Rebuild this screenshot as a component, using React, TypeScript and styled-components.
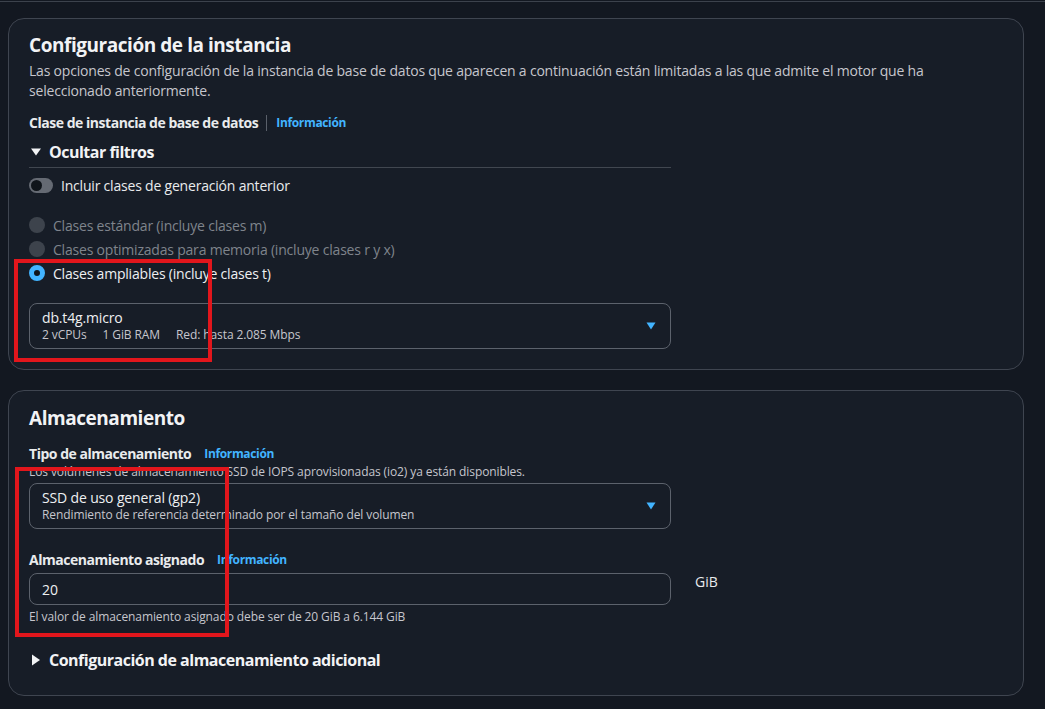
import React from "react";
import styled, { createGlobalStyle } from "styled-components";

const Global = createGlobalStyle`
  html, body { margin: 0; padding: 0; background: #131821; }
  body { font-family: "Open Sans", "Noto Sans", sans-serif; color: #e9ebed; }
  * { box-sizing: border-box; }
`;

const Page = styled.div`
  position: relative;
  width: 1045px;
  height: 709px;
  overflow: hidden;
  background: #131821;
`;

const TopRule = styled.div`
  margin-top: 1px;
  height: 1px;
  background: #3c424c;
`;

const Stack = styled.div`
  display: flex;
  flex-direction: column;
  gap: 20px;
  padding: 16px 21px 0 8px;
`;

const Card = styled.section<{ $pt: number; $pb: number }>`
  background: #171d27;
  border: 1px solid #3f4550;
  border-radius: 16px;
  padding: ${(p) => `${p.$pt}px 20px ${p.$pb}px 20px`};
  display: flex;
  flex-direction: column;
`;

const Title = styled.h2`
  margin: 0;
  font-size: 19px;
  line-height: 24px;
  font-weight: 700;
  color: #f2f3f5;
  letter-spacing: -0.45px;
`;

const Desc = styled.p`
  margin: 4px 0 0;
  font-size: 14px;
  line-height: 20px;
  color: #c6c6cd;
  max-width: 930px;
  letter-spacing: -0.2px;
`;

const LabelRow = styled.div<{ $mt: number }>`
  display: flex;
  align-items: center;
  margin-top: ${(p) => p.$mt}px;
  height: 20px;
`;

const Label = styled.span`
  font-size: 14px;
  font-weight: 700;
  color: #e9ebed;
  line-height: 20px;
  letter-spacing: -0.47px;
`;

const Divider = styled.span`
  width: 1px;
  height: 16px;
  background: #5a606a;
  margin: 0 9px 0 8px;
`;

const Info = styled.a<{ $gap?: number }>`
  font-size: 12px;
  font-weight: 700;
  color: #42b4ff;
  margin-left: ${(p) => p.$gap ?? 0}px;
  line-height: 16px;
  text-decoration: none;
  letter-spacing: -0.35px;
`;

const Expander = styled.div<{ $mt: number; $line?: boolean }>`
  display: flex;
  align-items: center;
  gap: 8px;
  margin-top: ${(p) => p.$mt}px;
  width: 642px;
  padding-bottom: ${(p) => (p.$line ? 4 : 0)}px;
  border-bottom: ${(p) => (p.$line ? "1px solid #414750" : "none")};
  font-size: 16px;
  line-height: 22px;
  font-weight: 700;
  color: #f2f3f5;
  letter-spacing: -0.5px;
`;

const Caret = styled.svg`
  flex: none;
  margin-left: 2px;
`;

const ToggleRow = styled.div`
  display: flex;
  align-items: center;
  gap: 8px;
  margin-top: 6px;
  height: 22px;
  font-size: 14px;
  color: #e9ebed;
  letter-spacing: -0.2px;
`;

const Track = styled.span`
  width: 24px;
  height: 15px;
  border-radius: 8px;
  background: #656a73;
  display: flex;
  align-items: center;
  padding-left: 2px;
`;

const Knob = styled.span`
  width: 11px;
  height: 11px;
  border-radius: 50%;
  background: #0f141a;
`;

const RadioGroup = styled.div`
  display: flex;
  flex-direction: column;
  margin-top: 17px;
`;

const RadioRow = styled.label<{ $disabled?: boolean }>`
  display: flex;
  align-items: center;
  gap: 8px;
  height: 24px;
  font-size: 14px;
  letter-spacing: -0.2px;
  color: ${(p) => (p.$disabled ? "#7f848c" : "#eef0f2")};
`;

const RadioDot = styled.span<{ $checked?: boolean }>`
  width: 16px;
  height: 16px;
  border-radius: 50%;
  flex: none;
  background: ${(p) => (p.$checked ? "#0f141a" : "#3d434c")};
  border: ${(p) => (p.$checked ? "5px solid #42b4ff" : "none")};
`;

const SelectBox = styled.div<{ $mt: number }>`
  margin-top: ${(p) => p.$mt}px;
  width: 642px;
  border: 1px solid #5c626c;
  border-radius: 8px;
  padding: 5px 14px 5px 12px;
  display: flex;
  align-items: center;
  justify-content: space-between;
`;

const SelectText = styled.div`
  display: flex;
  flex-direction: column;
`;

const Main = styled.span`
  font-size: 14px;
  line-height: 18px;
  color: #eef0f2;
  letter-spacing: -0.15px;
`;

const Sub = styled.span`
  font-size: 12px;
  line-height: 16px;
  color: #c6c6cd;
  display: flex;
  gap: 16px;
  letter-spacing: -0.1px;
`;

const Small = styled.p<{ $mt: number }>`
  margin: ${(p) => p.$mt}px 0 0;
  font-size: 12px;
  line-height: 16px;
  color: #c6c6cd;
  letter-spacing: -0.1px;
`;

const InputRow = styled.div`
  display: flex;
  align-items: center;
  gap: 24px;
  margin-top: 3px;
`;

const Input = styled.div`
  width: 642px;
  height: 32px;
  border: 1px solid #5c626c;
  border-radius: 8px;
  padding: 0 12px;
  display: flex;
  align-items: center;
  font-size: 14px;
  color: #eef0f2;
`;

const Unit = styled.span`
  font-size: 14px;
  color: #e9ebed;
  margin-top: -16px;
`;

const Highlight = styled.div<{ $l: number; $t: number; $w: number; $h: number }>`
  position: absolute;
  left: ${(p) => p.$l}px;
  top: ${(p) => p.$t}px;
  width: ${(p) => p.$w}px;
  height: ${(p) => p.$h}px;
  border: 4px solid #e2161c;
  pointer-events: none;
`;

const DropCaret = () => (
  <svg width="10" height="8" viewBox="0 0 10 8">
    <path d="M0.5 0.5 H9.5 L5 7.5 Z" fill="#42b4ff" />
  </svg>
);

const Down = () => (
  <Caret width="10" height="10" viewBox="0 0 10 10">
    <path d="M0 1.5 H10 L5 8.5 Z" fill="#f2f3f5" />
  </Caret>
);

const Right = () => (
  <Caret width="10" height="12" viewBox="0 0 10 12">
    <path d="M1 0.5 V11.5 L9 6 Z" fill="#f2f3f5" />
  </Caret>
);

export default function App() {
  return (
    <Page>
      <Global />
      <TopRule />
      <Stack>
        <Card $pt={14} $pb={20}>
          <Title>Configuración de la instancia</Title>
          <Desc>
            Las opciones de configuración de la instancia de base de datos que aparecen a continuación están
            limitadas a las que admite el motor que ha seleccionado anteriormente.
          </Desc>
          <LabelRow $mt={12}>
            <Label>Clase de instancia de base de datos</Label>
            <Divider />
            <Info href="#">Información</Info>
          </LabelRow>
          <Expander $mt={8} $line>
            <Down />
            Ocultar filtros
          </Expander>
          <ToggleRow>
            <Track>
              <Knob />
            </Track>
            Incluir clases de generación anterior
          </ToggleRow>
          <RadioGroup>
            <RadioRow $disabled>
              <RadioDot />
              Clases estándar (incluye clases m)
            </RadioRow>
            <RadioRow $disabled>
              <RadioDot />
              Clases optimizadas para memoria (incluye clases r y x)
            </RadioRow>
            <RadioRow>
              <RadioDot $checked />
              Clases ampliables (incluye clases t)
            </RadioRow>
          </RadioGroup>
          <SelectBox $mt={18}>
            <SelectText>
              <Main>db.t4g.micro</Main>
              <Sub>
                <span>2 vCPUs</span>
                <span>1 GiB RAM</span>
                <span>Red: hasta 2.085 Mbps</span>
              </Sub>
            </SelectText>
            <DropCaret />
          </SelectBox>
        </Card>

        <Card $pt={15} $pb={24}>
          <Title>Almacenamiento</Title>
          <LabelRow $mt={14}>
            <Label>Tipo de almacenamiento</Label>
            <Info href="#" $gap={13}>Información</Info>
          </LabelRow>
          <Small $mt={0}>
            Los volúmenes de almacenamiento SSD de IOPS aprovisionadas (io2) ya están disponibles.
          </Small>
          <SelectBox $mt={3}>
            <SelectText>
              <Main>SSD de uso general (gp2)</Main>
              <Sub>Rendimiento de referencia determinado por el tamaño del volumen</Sub>
            </SelectText>
            <DropCaret />
          </SelectBox>
          <LabelRow $mt={21}>
            <Label>Almacenamiento asignado</Label>
            <Info href="#" $gap={13}>Información</Info>
          </LabelRow>
          <InputRow>
            <Input>20</Input>
            <Unit>GiB</Unit>
          </InputRow>
          <Small $mt={4}>El valor de almacenamiento asignado debe ser de 20 GiB a 6.144 GiB</Small>
          <Expander $mt={24}>
            <Right />
            Configuración de almacenamiento adicional
          </Expander>
        </Card>
      </Stack>
      <Highlight $l={14} $t={259} $w={198} $h={103} />
      <Highlight $l={15} $t={467} $w={214} $h={170} />
    </Page>
  );
}
